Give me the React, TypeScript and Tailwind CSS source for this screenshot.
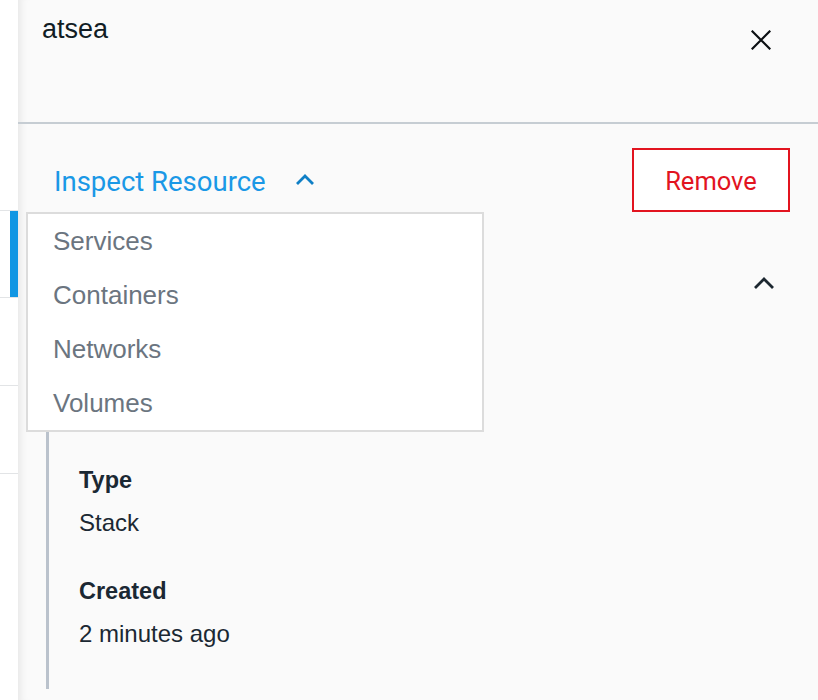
import React from "react";

function Field({ label, value }: { label: string; value: string }) {
  return (
    <div className="mb-[40px] last:mb-0">
      <div className="h-[28px] leading-[28px] text-[23.5px] font-bold text-[#1b2833]">{label}</div>
      <div className="mt-[15px] h-[28px] leading-[28px] text-[24px] text-[#1b2833]">{value}</div>
    </div>
  );
}

export default function App() {
  return (
    <div className="w-[818px] h-[700px] flex overflow-hidden bg-white" style={{ fontFamily: '"Liberation Sans", Arial, sans-serif' }}>
      {/* left strip */}
      <div className="w-[18px] shrink-0 bg-white flex flex-col">
        <div className="h-[211px] border-b border-[#e2e4e6]" />
        <div className="h-[87px] border-b border-[#e2e4e6] flex justify-end">
          <div className="w-[8px] bg-[#1196e3]" />
        </div>
        <div className="h-[88px] border-b border-[#e2e4e6]" />
        <div className="h-[88px] border-b border-[#e2e4e6]" />
      </div>

      {/* panel */}
      <div className="relative flex-1 bg-[#fafafa] shadow-[inset_9px_0_8px_-7px_rgba(0,0,0,0.09)] flex flex-col">
        {/* header */}
        <div className="h-[124px] border-b-2 border-[#c6cdd3] flex items-start justify-between pl-[24px] pr-[47px]">
          <div className="pt-[13px] text-[27px] leading-[32px] text-[#111c24]">atsea</div>
          <svg className="mt-[30px]" width="20" height="20" viewBox="0 0 20 20">
            <path d="M1.5 1.5 L18.5 18.5 M18.5 1.5 L1.5 18.5" stroke="#0b0f12" strokeWidth="2.2" strokeLinecap="square" fill="none" />
          </svg>
        </div>

        {/* action row */}
        <div className="mt-[24px] h-[64px] flex items-center justify-between pl-[36px] pr-[28px]">
          <div className="flex items-center gap-[29px]" style={{ fontFamily: 'Roboto, sans-serif' }}>
            <span className="mt-[3px] text-[27.5px] text-[#1a98e6] leading-none">Inspect Resource</span>
            <svg width="20" height="13" viewBox="0 0 20 13" className="-mt-[2px]">
              <path d="M2 11 L10 3 L18 11" stroke="#0f7fc6" strokeWidth="2.8" fill="none" />
            </svg>
          </div>
          <button className="w-[158px] h-[64px] pt-[2px] border-2 border-[#e2141f] bg-white text-[#e2141f] text-[25.5px]" style={{ fontFamily: 'Roboto, sans-serif' }}>
            Remove
          </button>
        </div>

        {/* section */}
        <div className="h-[142px] flex items-center justify-end pr-[43px]">
          <svg width="22" height="14" viewBox="0 0 22 14">
            <path d="M2 12 L11 3 L20 12" stroke="#1c2730" strokeWidth="2.8" fill="none" />
          </svg>
        </div>
        <div className="ml-[28px] border-l-[3px] border-[#bac2cc] pl-[30px] pt-[112px] pb-[41px]">
          <Field label="Type" value="Stack" />
          <Field label="Created" value="2 minutes ago" />
        </div>

        {/* dropdown overlay */}
        <div className="absolute left-[8px] top-[212px] w-[458px] border-2 border-[#dcdcdc] bg-white">
          {["Services", "Containers", "Networks", "Volumes"].map((t) => (
            <div key={t} className="h-[54px] flex items-center pl-[25px] text-[26px] text-[#6b7580]">
              {t}
            </div>
          ))}
        </div>
      </div>
    </div>
  );
}
